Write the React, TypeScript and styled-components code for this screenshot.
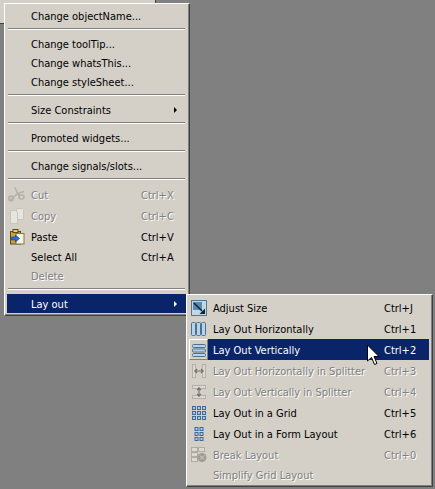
import styled, { createGlobalStyle } from "styled-components";
import type { ReactNode } from "react";

const GlobalStyle = createGlobalStyle`
  html, body {
    margin: 0;
    padding: 0;
    background: #808080;
  }
`;

const Desktop = styled.div`
  position: relative;
  width: 435px;
  height: 489px;
  overflow: hidden;
  background: #808080;
  font-family: "DejaVu Sans Condensed", "DejaVu Sans", sans-serif;
  font-stretch: condensed;
  font-size: 11px;
  color: #000;
`;

const ParentWidget = styled.div`
  position: absolute;
  left: 0;
  top: 0;
  width: 155px;
  height: 23px;
  background: #d4d0c8;
  border-right: 1px solid #404040;
  border-bottom: 1px solid #404040;
`;

const Menu = styled.div<{ $left: number; $top: number; $width: number }>`
  position: absolute;
  left: ${(p) => p.$left}px;
  top: ${(p) => p.$top}px;
  width: ${(p) => p.$width}px;
  box-sizing: border-box;
  padding: 2px 3px 2px 2px;
  background: #d4d0c8;
  border-top: 1px solid #fff;
  border-left: 1px solid #fff;
  border-right: 1px solid #404040;
  border-bottom: 1px solid #404040;
  box-shadow: inset -1px -1px 0 #808080;
`;

const Row = styled.div<{ $tall?: boolean; $active?: boolean; $disabled?: boolean; $short: number }>`
  display: grid;
  grid-template-columns: 19px 1fr ${(p) => p.$short}px;
  align-items: center;
  height: ${(p) => (p.$tall ? 21 : 19)}px;
  white-space: nowrap;
  color: ${(p) => (p.$active ? "#fff" : p.$disabled ? "#808080" : "#000")};
  background: ${(p) => (p.$active ? "#0a246a" : "transparent")};
  text-shadow: ${(p) => (p.$disabled ? "1px 1px 0 #fff" : "none")};
`;

const IconCell = styled.span<{ $raised?: boolean }>`
  display: flex;
  align-items: center;
  justify-content: center;
  height: 100%;
  box-sizing: border-box;
  background: #d4d0c8;
  border: 1px solid ${(p) => (p.$raised ? "#fff" : "transparent")};
  border-right-color: ${(p) => (p.$raised ? "#808080" : "transparent")};
  border-bottom-color: ${(p) => (p.$raised ? "#808080" : "transparent")};
`;

const BlankCell = styled.span``;

const Label = styled.span`
  padding: 2px 0 0 5px;
`;

const Shortcut = styled.span`
  display: block;
  padding-top: 2px;
`;

const Arrow = styled.span<{ $light?: boolean }>`
  justify-self: end;
  margin-right: 9px;
  width: 0;
  height: 0;
  border-top: 3px solid transparent;
  border-bottom: 3px solid transparent;
  border-left: 3px solid ${(p) => (p.$light ? "#fff" : "#000")};
`;

const Separator = styled.div`
  height: 9px;
  box-sizing: border-box;
  padding: 3px 1px 0;

  &::before {
    content: "";
    display: block;
    height: 1px;
    background: #808080;
  }
  &::after {
    content: "";
    display: block;
    height: 1px;
    background: #fff;
  }
`;

const Cursor = styled.svg`
  position: absolute;
  left: 366px;
  top: 344px;
`;

const ScissorsIcon = () => (
  <svg width="17" height="16" viewBox="0 0 17 16" fill="none" stroke="#b4b0a8" strokeWidth="1.5">
    <path d="M7 0.5l2.5 6 6.5-2M2.5 13l7-6.5 2 2" />
    <ellipse cx="3" cy="11.5" rx="2.2" ry="2.4" />
    <ellipse cx="13.5" cy="10" rx="2.6" ry="2" />
    <path d="M9.5 6.5l2.5 3" />
  </svg>
);

const CopyIcon = () => (
  <svg width="16" height="16" viewBox="0 0 16 16" fill="#e8e5de" stroke="#c8c4bc">
    <path d="M7.5 0.5h6l1 1v10h-7z" />
    <path d="M1.5 2.5h5l2 2v11h-7z" />
  </svg>
);

const PasteIcon = () => (
  <svg width="16" height="16" viewBox="0 0 16 16">
    <rect x="1.5" y="2.5" width="10" height="12.5" fill="#d0a030" stroke="#5a4a20" />
    <rect x="4" y="0.5" width="5" height="3" fill="#e8d070" stroke="#5a4a20" />
    <rect x="7" y="4.5" width="8" height="10.5" fill="#f8f4d8" stroke="#807850" />
    <path d="M2.5 8h4v-2l4 3.5-4 3.5v-2h-4z" fill="#2070e0" stroke="#103890" strokeWidth="0.6" />
  </svg>
);

const AdjustIcon = () => (
  <svg width="16" height="16" viewBox="0 0 16 16">
    <rect x="0.5" y="0.5" width="15" height="15" fill="#c4d6e4" stroke="#5a7488" />
    <rect x="2" y="2" width="9" height="8" fill="#5a8ab0" />
    <path d="M3 3l8 8" stroke="#062838" strokeWidth="1.6" />
    <path d="M14 14H8.5l5.5-5.5z" fill="#062838" />
  </svg>
);

const Bars = ({ vertical }: { vertical?: boolean }) => (
  <svg width="16" height="16" viewBox="0 0 16 16">
    {[0, 5, 10].map((o) => (
      <rect
        key={o}
        x={vertical ? 1.5 : 0.5 + o}
        y={vertical ? 2.5 + o * 0.9 : 1.5}
        width={vertical ? 13 : 4}
        height={vertical ? 3 : 13}
        rx="1"
        fill="#b4d4ec"
        stroke="#4f6f8f"
      />
    ))}
  </svg>
);

const SplitterIcon = ({ vertical }: { vertical?: boolean }) => (
  <svg width="16" height="16" viewBox="0 0 16 16" fill="none">
    <g transform={vertical ? "rotate(90 8 8)" : undefined}>
      <rect x="1.5" y="1.5" width="3" height="13" fill="#dcd9d2" stroke="#b4b0a8" />
      <rect x="11.5" y="1.5" width="3" height="13" fill="#dcd9d2" stroke="#b4b0a8" />
      <path d="M3 8h10M6 6l-2 2 2 2M10 6l2 2-2 2" stroke="#77736b" strokeWidth="1.2" />
    </g>
  </svg>
);

const GridIcon = ({ cols }: { cols: number }) => (
  <svg width="16" height="16" viewBox="0 0 16 16">
    {[1.5, 6.5, 11.5].flatMap((y) =>
      Array.from({ length: cols }, (_, i) => (
        <rect
          key={`${y}-${i}`}
          x={(cols === 3 ? 1.5 : 4) + i * 5}
          y={y}
          width="3"
          height="3"
          fill="#a8c8e8"
          stroke="#3f6a9c"
        />
      ))
    )}
  </svg>
);

const BreakIcon = () => (
  <svg width="16" height="16" viewBox="0 0 16 16">
    <g fill="#dcd9d2" stroke="#b0aca4">
      <rect x="0.5" y="0.5" width="6" height="4" />
      <rect x="7.5" y="0.5" width="6" height="4" />
      <rect x="0.5" y="5.5" width="6" height="4" />
      <rect x="0.5" y="10.5" width="6" height="4" />
    </g>
    <circle cx="11" cy="10.5" r="4.5" fill="#a09c94" />
    <path d="M9 8.5l4 4M13 8.5l-4 4" stroke="#d4d0c8" />
  </svg>
);

type Entry =
  | "sep"
  | {
      label: string;
      shortcut?: string;
      icon?: ReactNode;
      disabled?: boolean;
      active?: boolean;
      submenu?: boolean;
      tall?: boolean;
    };

const mainEntries: Entry[] = [
  { label: "Change objectName..." },
  "sep",
  { label: "Change toolTip..." },
  { label: "Change whatsThis..." },
  { label: "Change styleSheet..." },
  "sep",
  { label: "Size Constraints", submenu: true },
  "sep",
  { label: "Promoted widgets..." },
  "sep",
  { label: "Change signals/slots..." },
  "sep",
  { label: "Cut", shortcut: "Ctrl+X", icon: <ScissorsIcon />, disabled: true, tall: true },
  { label: "Copy", shortcut: "Ctrl+C", icon: <CopyIcon />, disabled: true, tall: true },
  { label: "Paste", shortcut: "Ctrl+V", icon: <PasteIcon />, tall: true },
  { label: "Select All", shortcut: "Ctrl+A" },
  { label: "Delete", disabled: true },
  "sep",
  { label: "Lay out", submenu: true, active: true },
];

const layoutEntries: Entry[] = [
  { label: "Adjust Size", shortcut: "Ctrl+J", icon: <AdjustIcon />, tall: true },
  { label: "Lay Out Horizontally", shortcut: "Ctrl+1", icon: <Bars />, tall: true },
  { label: "Lay Out Vertically", shortcut: "Ctrl+2", icon: <Bars vertical />, tall: true, active: true },
  { label: "Lay Out Horizontally in Splitter", shortcut: "Ctrl+3", icon: <SplitterIcon />, disabled: true, tall: true },
  { label: "Lay Out Vertically in Splitter", shortcut: "Ctrl+4", icon: <SplitterIcon vertical />, disabled: true, tall: true },
  { label: "Lay Out in a Grid", shortcut: "Ctrl+5", icon: <GridIcon cols={3} />, tall: true },
  { label: "Lay Out in a Form Layout", shortcut: "Ctrl+6", icon: <GridIcon cols={2} />, tall: true },
  { label: "Break Layout", shortcut: "Ctrl+0", icon: <BreakIcon />, disabled: true, tall: true },
  { label: "Simplify Grid Layout", disabled: true },
];

const renderEntries = (entries: Entry[], short: number) =>
  entries.map((entry, i) => {
    if (entry === "sep") return <Separator key={i} />;
    return (
      <Row key={i} $short={short} $tall={entry.tall} $active={entry.active} $disabled={entry.disabled}>
        {entry.active && entry.icon ? (
          <IconCell $raised>{entry.icon}</IconCell>
        ) : entry.icon ? (
          <IconCell>{entry.icon}</IconCell>
        ) : (
          <BlankCell />
        )}
        <Label>{entry.label}</Label>
        {entry.submenu ? <Arrow $light={entry.active} /> : <Shortcut>{entry.shortcut}</Shortcut>}
      </Row>
    );
  });

const App = () => (
  <>
    <GlobalStyle />
    <Desktop>
      <ParentWidget />
      <Menu $left={4} $top={3} $width={186}>
        {renderEntries(mainEntries, 45)}
      </Menu>
      <Menu $left={186} $top={294} $width={247}>
        {renderEntries(layoutEntries, 45)}
      </Menu>
      <Cursor width="13" height="22" viewBox="0 0 13 22">
        <path d="M1.5 1v16l4-3.5 3 7 2.5-1-3-7h5z" fill="#fff" stroke="#000" />
      </Cursor>
    </Desktop>
  </>
);

export default App;
